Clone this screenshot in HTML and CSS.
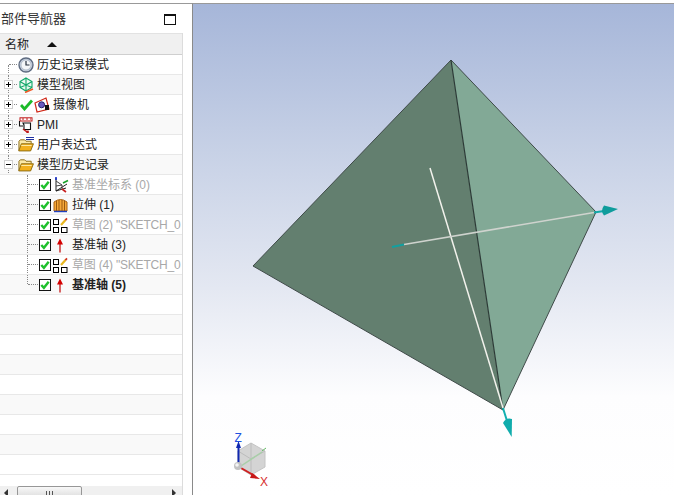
FILE: index.html
```html
<!DOCTYPE html>
<html lang="zh">
<head>
<meta charset="utf-8">
<title>部件导航器</title>
<link rel="stylesheet" href="styles.css">
</head>
<body>
<svg width="0" height="0" class="defs">
  <defs>
    <symbol id="check" viewBox="0 0 13 13">
      <rect x="0.5" y="0.5" width="12" height="12" fill="#fff" stroke="#000"/>
      <path d="M2.500 6.500 L5.300 9.600 L10.500 3" fill="none" stroke="#1fc02c" stroke-width="2.600"/>
    </symbol>
    <symbol id="folder" viewBox="0 0 17 15">
      <path d="M1 13.500 V3.500 L2.500 2 H7 L8.500 3.500 H14 V6" fill="#fbe9a8" stroke="#8a6a12"/>
      <path d="M0.800 13.800 L3.600 6.200 H16.400 L13.400 13.800 Z" fill="#f2b01e" stroke="#8a6a12"/>
      <path d="M3.500 8 H14.500" stroke="#fff0b0"/>
    </symbol>
    <symbol id="sketch" viewBox="0 0 16 16">
      <rect x="0.500" y="2.500" width="5" height="5" fill="#fff" stroke="#000"/>
      <rect x="0.500" y="10.500" width="5" height="5" fill="#fff" stroke="#000"/>
      <rect x="8.500" y="10.500" width="5.500" height="5" fill="#fff" stroke="#000"/>
      <path d="M8 8 L12.500 3" stroke="#e8b820" stroke-width="2.200"/>
      <path d="M12.400 3.100 L14 1.400" stroke="#d03020" stroke-width="1.800"/>
    </symbol>
    <symbol id="axis" viewBox="0 0 16 16">
      <path d="M7 15.500 V5" stroke="#c00000" stroke-width="1.200"/>
      <path d="M7 1.500 L4 7.500 H10 Z" fill="#d40000"/>
    </symbol>
  </defs>
</svg>
<div class="app">
  <aside class="nav">
    <div class="nav-title">
      <span>部件导航器</span>
      <span class="maximize"></span>
    </div>
    <div class="tree">
      <div class="col-head"><span>名称</span><span class="sort"></span></div>
      <div class="rows">
        <div class="row top-level first">
          <span class="exp none"></span>
          <svg class="ico" viewBox="0 0 16 16"><circle cx="8" cy="8" r="7" fill="#c6d0de" stroke="#5e6b80" stroke-width="1.400"/><circle cx="8" cy="8" r="5" fill="#f4f6f8" stroke="#9aa6b6" stroke-width=".6"/><path d="M8 4 V8 H11.500" fill="none" stroke="#26303e" stroke-width="1.200"/></svg>
          <span class="lbl">历史记录模式</span>
        </div>
        <div class="row alt top-level">
          <span class="exp plus"></span>
          <svg class="ico" viewBox="0 0 16 16"><path d="M8 1 L14 4.500 V10.500 L8 14 L2 10.500 V4.500 Z M2 4.500 L8 8 L14 4.500 M8 8 V14 M2 10.500 L8 8 L14 10.500 M8 1 V8" fill="#e6f8ee" stroke="#10a868" stroke-width="1.100"/><path d="M7 15.500 L15 12" stroke="#f05a28" stroke-width="1.600"/></svg>
          <span class="lbl">模型视图</span>
        </div>
        <div class="row top-level">
          <span class="exp plus"></span>
          <svg class="tick" viewBox="0 0 13 13"><path d="M1 7 L4.500 11 L12 2.500" fill="none" stroke="#1cbb2a" stroke-width="2.800"/></svg>
          <svg class="ico" viewBox="0 0 16 16"><path d="M1 6 L12 1 L15 12 L3 15 Z" fill="#fff" stroke="#d02818" stroke-width="1.200"/><circle cx="7.600" cy="7.800" r="3" fill="#6a5ac0" stroke="#28206e"/><rect x="11" y="8" width="4" height="5" fill="#111"/></svg>
          <span class="lbl">摄像机</span>
        </div>
        <div class="row alt top-level">
          <span class="exp plus"></span>
          <svg class="ico" viewBox="0 0 16 16"><rect x="2" y="0.800" width="12" height="3.200" fill="#fff" stroke="#c01818"/><path d="M4 2 H6 M8 2 H10 M12 2 H13" stroke="#c01818"/><path d="M1.500 4 V9 H5 M5 6 H12.500 V12.500 H6 V8 Z" fill="#fff" stroke="#111" stroke-width="1.100"/><path d="M5 12 L9 15" stroke="#c01818" stroke-width="1.400"/><rect x="8.400" y="13.600" width="2.400" height="2.400" fill="#c01818"/></svg>
          <span class="lbl">PMI</span>
        </div>
        <div class="row top-level">
          <span class="exp plus"></span>
          <span class="folder-wrap">
            <svg class="ico" viewBox="0 0 17 15"><use href="#folder"/></svg>
            <span class="eq"></span>
          </span>
          <span class="lbl">用户表达式</span>
        </div>
        <div class="row alt top-level">
          <span class="exp minus"></span>
          <svg class="ico" viewBox="0 0 17 15"><use href="#folder"/></svg>
          <span class="lbl">模型历史记录</span>
        </div>
        <div class="row child grey">
          <svg class="box" viewBox="0 0 13 13"><use href="#check"/></svg>
          <svg class="ico" viewBox="0 0 16 16"><path d="M3 1 V14 M3 14 L13 11 M3 14 L14 7" stroke="#222" stroke-width="1" fill="none"/><path d="M3 4 L9 8 V13 M3 9 L9 8" stroke="#444" fill="none"/><path d="M10 6 L15 3.500" stroke="#18a028" stroke-width="1.600"/><path d="M9 12 L13 15" stroke="#c82020" stroke-width="1.600"/><path d="M3 0 V3" stroke="#1830c8" stroke-width="1.600"/></svg>
          <span class="lbl">基准坐标系 (0)</span>
        </div>
        <div class="row alt child">
          <svg class="box" viewBox="0 0 13 13"><use href="#check"/></svg>
          <svg class="ico" viewBox="0 0 16 16"><path d="M1 14 V5 Q7.500 0 14 5 V14 Z" fill="#f6a838" stroke="#a86010"/><path d="M3.500 14 V4 M6 14 V3 M9 14 V3 M11.500 14 V4" stroke="#9a5a10"/><path d="M1 14.500 H14" stroke="#2040c0" stroke-width="1.400"/></svg>
          <span class="lbl">拉伸 (1)</span>
        </div>
        <div class="row child grey">
          <svg class="box" viewBox="0 0 13 13"><use href="#check"/></svg>
          <svg class="ico" viewBox="0 0 16 16"><use href="#sketch"/></svg>
          <span class="lbl tight">草图 (2) "SKETCH_0</span>
        </div>
        <div class="row alt child">
          <svg class="box" viewBox="0 0 13 13"><use href="#check"/></svg>
          <svg class="ico" viewBox="0 0 16 16"><use href="#axis"/></svg>
          <span class="lbl">基准轴 (3)</span>
        </div>
        <div class="row child grey">
          <svg class="box" viewBox="0 0 13 13"><use href="#check"/></svg>
          <svg class="ico" viewBox="0 0 16 16"><use href="#sketch"/></svg>
          <span class="lbl tight">草图 (4) "SKETCH_0</span>
        </div>
        <div class="row alt child last">
          <svg class="box" viewBox="0 0 13 13"><use href="#check"/></svg>
          <svg class="ico" viewBox="0 0 16 16"><use href="#axis"/></svg>
          <span class="lbl strong">基准轴 (5)</span>
        </div>
        <div class="row"></div>
        <div class="row alt"></div>
        <div class="row"></div>
        <div class="row alt"></div>
        <div class="row"></div>
        <div class="row alt"></div>
        <div class="row"></div>
        <div class="row alt"></div>
        <div class="row"></div>
      </div>
      <div class="hscroll">
        <span class="arrow left"></span>
        <span class="thumb"><span class="grip"></span></span>
        <span class="arrow right"></span>
      </div>
    </div>
  </aside>
  <main class="view">
    <svg class="scene" viewBox="0 0 482 491" width="482" height="491">
      <g transform="translate(-193 -4)">
        <path d="M451 60 L253 266 L503 410 Z" fill="#637f6f"/>
        <path d="M451 60 L596 212 L503 410 Z" fill="#82a996"/>
        <path d="M451 60 L253 266 L503 410 L596 212 Z" fill="none" stroke="#3f4a48" stroke-width="1"/>
        <path d="M451 60 L503 410" fill="none" stroke="#2c3a36" stroke-width="1.200"/>
        <path d="M430 168 L503 408" stroke="#f2f2ec" stroke-width="1.500"/>
        <path d="M404 244.500 L594 212.500" stroke="#cfd3ce" stroke-width="1.600"/>
        <path d="M392 247 L404 244.500" stroke="#12a0a0" stroke-width="2"/>
        <path d="M594 212.500 L604 211" stroke="#12a8a8" stroke-width="2"/>
        <path d="M618 209 L604 205.500 Q600 211 604 215.500 Z" fill="#0f9c9c"/>
        <path d="M503 408 L507 421" stroke="#12b0b0" stroke-width="2"/>
        <path d="M511.700 437 L512 419 Q506 417 503 423 Z" fill="#10acac"/>
        <path d="M251 443 L265 451 V467 L251 475 L238 467 V451 Z" fill="#d4d4d4" stroke="#c4c4c4"/>
        <path d="M251 443 V459 M238 451 L251 459 L265 451 M251 459 V475" stroke="#bcbcbc" fill="none"/>
        <path d="M241 466 L262 452" stroke="#a8cfa8" stroke-width="1.500"/>
        <path d="M262 451 L266 448" stroke="#62b862"/>
        <path d="M238.500 464 V446" stroke="#1028b0" stroke-width="2"/>
        <path d="M238.500 441 L236 448 H241 Z" fill="#1028b0"/>
        <path d="M241 468 L255 476" stroke="#d02020" stroke-width="2"/>
        <path d="M260 479 L252 473 L250 478 Z" fill="#c81818"/>
        <circle cx="238" cy="466" r="4" fill="#c2c2c2"/>
        <circle cx="237" cy="465" r="1.800" fill="#f4f4f4"/>
        <text x="234.500" y="442" class="z">Z</text>
        <text x="260" y="486" class="x">X</text>
      </g>
    </svg>
  </main>
</div>
</body>
</html>
```

FILE: styles.css
```css
* {
  box-sizing: border-box;
}

html,
body {
  margin: 0;
  height: 100%;
  background: #fff;
  overflow: hidden;
}

.defs {
  display: block;
  height: 0;
}

.app {
  display: flex;
  height: 495px;
  padding-top: 3px;
  font: 12px/20px "Liberation Sans", "Noto Sans CJK SC", sans-serif;
  color: #222;
}

.nav {
  width: 193px;
  flex: none;
  display: flex;
  flex-direction: column;
  border-top: 1px solid #999;
  border-right: 1px solid #8a8a8a;
}

.nav-title {
  height: 29px;
  flex: none;
  display: flex;
  align-items: center;
  justify-content: space-between;
  padding: 0 16px 0 1px;
  font-size: 13px;
  color: #333;
}

.maximize {
  width: 12px;
  height: 11px;
  border: 1px solid #111;
  border-top-width: 2px;
  margin-top: 1px;
}

.tree {
  width: 183px;
  flex: 1;
  min-height: 0;
  display: flex;
  flex-direction: column;
  border-right: 1px solid #dcdcdc;
}

.col-head {
  height: 22px;
  flex: none;
  display: flex;
  align-items: center;
  gap: 18px;
  padding: 1px 0 0 5px;
  background: #f0f0f0;
  border-top: 1px solid #e2e2e2;
  border-bottom: 1px solid #cfcfcf;
  font-size: 12px;
}

.sort {
  width: 0;
  height: 0;
  border-left: 5px solid transparent;
  border-right: 5px solid transparent;
  border-bottom: 5px solid #111;
}

.rows {
  flex: 1;
  min-height: 0;
  overflow: hidden;
}

.row {
  position: relative;
  height: 20px;
  display: flex;
  align-items: center;
  background: #fff;
  border-bottom: 1px solid #e8e8e8;
  white-space: nowrap;
  overflow: hidden;
}

.row.alt {
  background: #f9f9f9;
}

.top-level {
  padding-left: 4px;
}

.top-level::before {
  content: "";
  position: absolute;
  left: 8px;
  top: 0;
  bottom: -1px;
  border-left: 1px dotted #888;
}

.top-level.first::before {
  top: 10px;
}

.top-level::after {
  content: "";
  position: absolute;
  left: 9px;
  top: 9px;
  width: 8px;
  border-top: 1px dotted #888;
}

.exp {
  position: relative;
  z-index: 1;
  width: 9px;
  height: 9px;
  flex: none;
  margin-right: 5px;
  border: 1px solid #cfcfcf;
  background: #fff;
}

.exp.none {
  visibility: hidden;
}

.plus::before,
.minus::before {
  content: "";
  position: absolute;
  left: 1px;
  top: 3px;
  width: 5px;
  height: 1px;
  background: #000;
}

.plus::after {
  content: "";
  position: absolute;
  left: 3px;
  top: 1px;
  width: 1px;
  height: 5px;
  background: #000;
}

.ico {
  position: relative;
  z-index: 1;
  width: 16px;
  height: 16px;
  flex: none;
  margin-right: 3px;
}

.tick {
  position: relative;
  z-index: 1;
  width: 13px;
  height: 13px;
  flex: none;
  margin: 0 1px 0 2px;
}

.folder-wrap {
  position: relative;
  display: flex;
}

.eq {
  position: absolute;
  left: 8px;
  top: 0;
  width: 8px;
  height: 3px;
  border-top: 1px solid #2030a0;
  border-bottom: 1px solid #2030a0;
  z-index: 2;
}

.child {
  padding-left: 39px;
}

.child::before {
  content: "";
  position: absolute;
  left: 27px;
  top: 0;
  bottom: -1px;
  border-left: 1px dotted #888;
}

.child.last::before {
  bottom: 10px;
}

.child::after {
  content: "";
  position: absolute;
  left: 28px;
  top: 9px;
  width: 10px;
  border-top: 1px dotted #888;
}

.box {
  width: 12px;
  height: 12px;
  flex: none;
  margin-right: 2px;
}

.lbl {
  padding-top: 1px;
}

.tight {
  letter-spacing: -0.2px;
}

.grey .lbl {
  color: #a8a8a8;
}

.strong {
  font-weight: bold;
}

.hscroll {
  height: 9px;
  flex: none;
  display: flex;
  align-items: flex-start;
  background: #f0f0f0;
  position: relative;
  overflow: hidden;
}

.thumb {
  width: 65px;
  height: 12px;
  margin-left: 17px;
  display: flex;
  justify-content: center;
  padding-top: 4px;
  border: 1px solid #979797;
  border-radius: 2px;
  background: linear-gradient(#f8f8f8, #dedede);
}

.grip {
  width: 7px;
  height: 5px;
  background: repeating-linear-gradient(90deg, #555 0 1px, transparent 1px 3px);
}

.arrow {
  position: absolute;
  top: 3px;
  width: 0;
  height: 0;
  border-top: 4px solid transparent;
  border-bottom: 4px solid transparent;
}

.arrow.left {
  left: 4px;
  border-right: 4px solid #333;
}

.arrow.right {
  right: 6px;
  border-left: 4px solid #333;
}

.view {
  flex: 1;
  min-width: 0;
  background: linear-gradient(#a6b6d9 0, #c7d1e6 30%, #e4e8f2 58%, #fdfdfe 80%, #fff 100%);
  border-top: 1px solid #999;
  overflow: hidden;
}

.scene {
  display: block;
}

.scene text {
  font: 12px "Liberation Sans", sans-serif;
}

.z {
  fill: #2050e0;
}

.x {
  fill: #d83030;
}
```
